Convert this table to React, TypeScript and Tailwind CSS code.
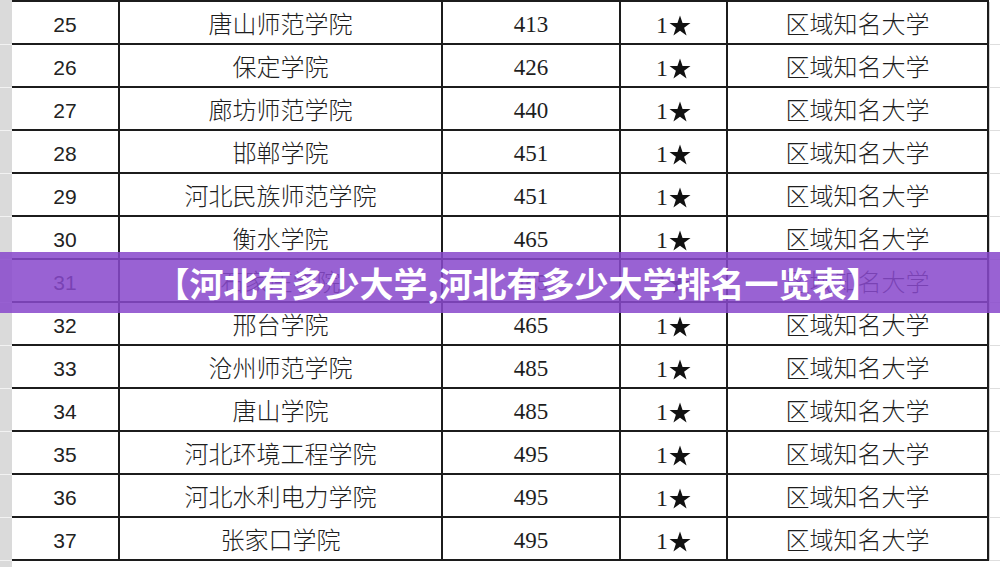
const rows = [
  { rank: 25, name: '唐山师范学院', score: 413 },
  { rank: 26, name: '保定学院', score: 426 },
  { rank: 27, name: '廊坊师范学院', score: 440 },
  { rank: 28, name: '邯郸学院', score: 451 },
  { rank: 29, name: '河北民族师范学院', score: 451 },
  { rank: 30, name: '衡水学院', score: 465 },
  { rank: 31, name: '石家庄学院', score: 465 },
  { rank: 32, name: '邢台学院', score: 465 },
  { rank: 33, name: '沧州师范学院', score: 485 },
  { rank: 34, name: '唐山学院', score: 485 },
  { rank: 35, name: '河北环境工程学院', score: 495 },
  { rank: 36, name: '河北水利电力学院', score: 495 },
  { rank: 37, name: '张家口学院', score: 495 },
];

const cjk = "font-['Noto_Sans_CJK_SC',sans-serif]";

function Star() {
  return (
    <svg width="22" height="21" viewBox="0 0 24 23" className="inline-block">
      <path
        d="M12 0.5l2.8 8.3h8.7l-7 5.2 2.7 8.4L12 17.2l-7.2 5.2 2.7-8.4-7-5.2h8.7z"
        fill="#111"
      />
    </svg>
  );
}

function Row({ rank, name, score }: { rank: number; name: string; score: number }) {
  return (
    <div className="flex h-[43px]">
      <div className="w-[12px] bg-[#dadada] border-b border-[#f2f2f2]" />
      <div className="flex h-[43px] border-b-2 border-[#1c1c1c]">
        <div className="w-[108px] border-r-2 border-[#1c1c1c] flex items-center justify-center pt-[5px] font-['Liberation_Sans',sans-serif] text-[21px] text-[#222]">
          {rank}
        </div>
        <div className={`w-[323px] border-r-2 border-[#1c1c1c] flex items-center justify-center pt-[1px] ${cjk} font-light text-[24px] text-[#1e1e1e]`}>
          {name}
        </div>
        <div className="w-[178px] border-r-2 border-[#1c1c1c] flex items-center justify-center pt-[5px] font-['Liberation_Serif',serif] text-[23px] text-[#1e1e1e]">
          {score}
        </div>
        <div className="w-[107px] border-r-2 border-[#1c1c1c] flex items-center justify-center gap-[1px] pt-[5px]">
          <span className="font-['Liberation_Serif',serif] text-[24px] text-[#1e1e1e] leading-none">1</span>
          <Star />
        </div>
        <div className={`w-[261px] border-r-2 border-[#1c1c1c] flex items-center justify-center pt-[1px] ${cjk} font-light text-[24px] text-[#1e1e1e]`}>
          区域知名大学
        </div>
      </div>
      <div className="flex-1 border-b border-[#dedede] border-l border-l-[#cfcfcf]" />
    </div>
  );
}

export default function App() {
  return (
    <div className="relative w-[1000px] h-[567px] overflow-hidden bg-white">
      <div className="flex">
        <div className="w-[12px] h-[2px] bg-[#dadada]" />
        <div className="w-[977px] h-[2px] bg-[#1c1c1c]" />
      </div>
      {rows.map((r) => (
        <Row key={r.rank} {...r} />
      ))}
      <div className="flex h-[20px]">
        <div className="w-[12px] bg-[#dadada]" />
        <div className="flex-1" />
      </div>

      <div className="absolute left-0 right-0 top-[252px] h-[61px] bg-[rgba(136,72,204,0.86)] flex items-center justify-center pl-[36px]">
        <span className={`${cjk} font-bold text-[34px] text-white leading-none`}>
          【河北有多少大学,河北有多少大学排名一览表】
        </span>
      </div>
    </div>
  );
}
